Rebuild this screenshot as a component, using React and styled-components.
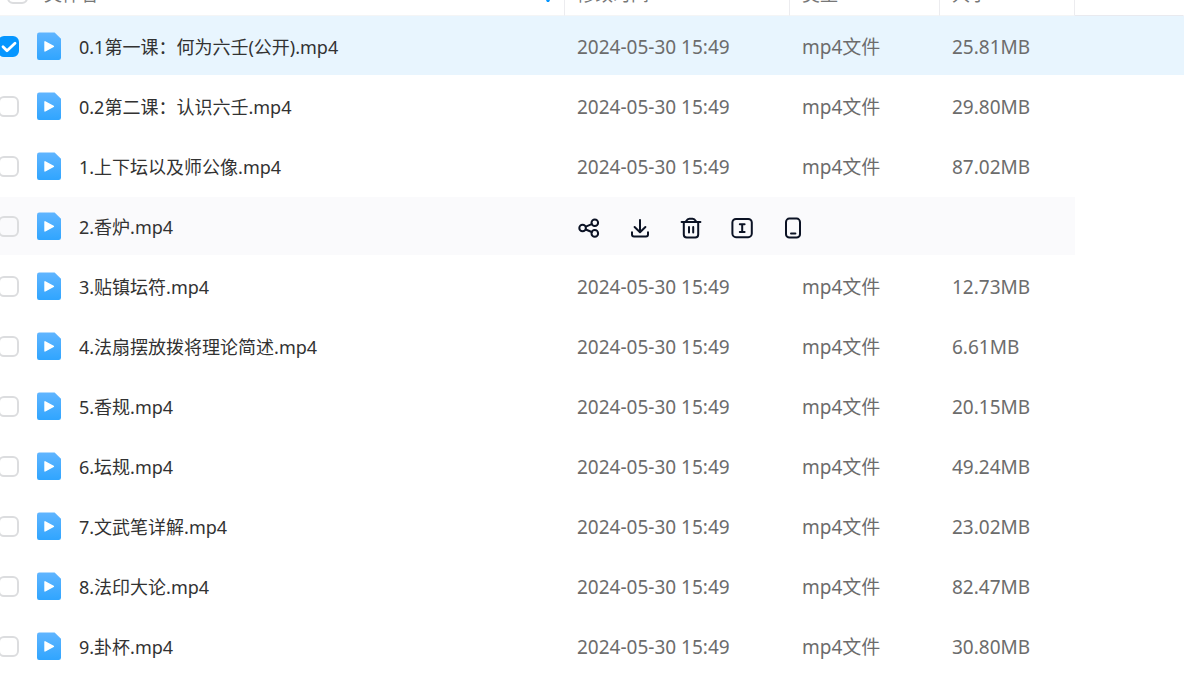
import { useState } from 'react';
import styled, { createGlobalStyle } from 'styled-components';

const GlobalStyle = createGlobalStyle`
  body {
    margin: 0;
    overflow: hidden;
    background: #fff;
    font-family: "Noto Sans", "Noto Sans CJK SC", sans-serif;
  }
`
const Page = styled.main`
  overflow: hidden;
`
// the list is scrolled a little, so the top of the header is cut off
const Table = styled.table`
  width: 100%;
  margin-top: -30px;
  table-layout: fixed;
  border-collapse: separate;
  border-spacing: 0;
`
const Col = styled.col`
  width: ${(p) => p.$width || 'auto'};
`
const HeadCell = styled.th`
  box-sizing: border-box;
  height: 46px;
  padding: 2px 12px 0;
  border-right: 1px solid ${(p) => (p.$last ? 'transparent' : '#ececef')};
  border-bottom: 1px solid ${(p) => (p.$last ? '#e9eaef' : '#f4f5f6')};
  color: #777;
  font-size: 18px;
  font-weight: 400;
  line-height: 24px;
  text-align: left;
`
const HeadName = styled.div`
  display: flex;
  align-items: center;
  gap: 16px;
  margin-left: -5px;
`
const SortArrow = styled.svg`
  width: 8px;
  height: 20px;
  margin-left: auto;
`
const Cell = styled.td`
  box-sizing: border-box;
  height: 60px;
  padding: 2px 12px 0;
  border-top: 1px solid ${(p) => (p.$selected ? '#e8f5fe' : '#fff')};
  border-bottom: 1px solid #fff;
  background: ${(p) => (p.$selected ? '#e8f5fe' : p.$active ? '#fafafc' : '#fff')};
  color: #6c6c6c;
  font-size: 19px;
  font-weight: 400;
  line-height: 24px;
  white-space: nowrap;
`
const NameCell = styled(Cell)`
  padding: 0;
  color: #323232;
  font-size: 18px;
`
const NameBox = styled.div`
  display: flex;
  align-items: center;
  margin-left: -2px;
`
const FileName = styled.label`
  padding-top: 2px;
  margin-left: 18px;
`
const CheckBox = styled.span`
  display: grid;
  width: 21px;
  height: 21px;
  flex: none;

  > * {
    grid-area: 1 / 1;
  }
`
const CheckInput = styled.input`
  appearance: none;
  box-sizing: border-box;
  width: 21px;
  height: 21px;
  margin: 0;
  border: 2px solid #dcdddf;
  border-radius: 6px;
  background: transparent;

  &:checked {
    border-color: #0696ff;
    background: #0696ff;
  }
`
const Tick = styled.svg`
  width: 21px;
  height: 21px;
  pointer-events: none;
`
const VideoSvg = styled.svg`
  width: 24px;
  height: 28px;
  margin-left: 18px;
  flex: none;
`
const Actions = styled.div`
  display: flex;
  gap: 27px;
  padding-top: 1px;
`
const ActionButton = styled.button`
  display: flex;
  width: 24px;
  height: 24px;
  padding: 0;
  border: 0;
  background: none;
  cursor: pointer;
`
const ActionSvg = styled.svg`
  width: 24px;
  height: 24px;
  fill: none;
  stroke: #0b1224;
  stroke-width: 2;
  stroke-linecap: round;
  stroke-linejoin: round;
`

const files = [
  { name: '0.1第一课：何为六壬(公开).mp4', size: '25.81MB' },
  { name: '0.2第二课：认识六壬.mp4', size: '29.80MB' },
  { name: '1.上下坛以及师公像.mp4', size: '87.02MB' },
  { name: '2.香炉.mp4', active: true },
  { name: '3.贴镇坛符.mp4', size: '12.73MB' },
  { name: '4.法扇摆放拨将理论简述.mp4', size: '6.61MB' },
  { name: '5.香规.mp4', size: '20.15MB' },
  { name: '6.坛规.mp4', size: '49.24MB' },
  { name: '7.文武笔详解.mp4', size: '23.02MB' },
  { name: '8.法印大论.mp4', size: '82.47MB' },
  { name: '9.卦杯.mp4', size: '30.80MB' },
]

const actions = [
  {
    label: '分享',
    icon: (
      <>
        <circle cx="5.6" cy="12" r="3.3" />
        <circle cx="17.8" cy="6.8" r="3.3" />
        <circle cx="17.8" cy="17.4" r="3.3" />
        <path d="M8.8 10.6l5.9-2.5M8.8 13.5l5.9 2.5" />
      </>
    ),
  },
  {
    label: '下载',
    icon: <path d="M12 4v12M6.6 11l5.4 5.2 5.4-5.2M4 16.2v2.3a2 2 0 0 0 2 2h12a2 2 0 0 0 2-2v-2.3" />,
  },
  {
    label: '删除',
    icon: (
      <>
        <path d="M2.6 6h18.8M4.8 6v12.4a3 3 0 0 0 3 3h8.4a3 3 0 0 0 3-3V6" />
        <path d="M6.8 5.6c1-1.6 1.8-2.9 3.6-2.9h3.2c1.8 0 2.6 1.3 3.6 2.9M10 11v5.4M14.2 11v5.4" />
      </>
    ),
  },
  {
    label: '重命名',
    icon: (
      <>
        <rect x="2.4" y="3" width="19.4" height="18.2" rx="3.6" />
        <path d="M9.8 8.2h4.8M9.8 16h4.8M12.2 8.2V16" />
      </>
    ),
  },
  {
    label: '发送到手机',
    icon: (
      <>
        <rect x="5" y="2.6" width="14" height="19" rx="3.4" />
        <path d="M10 17.6h4.4" />
      </>
    ),
  },
]

const Check = ({ checked, ...rest }) => (
  <CheckBox>
    <CheckInput type="checkbox" checked={checked} {...rest} />
    {checked && (
      <Tick viewBox="0 0 21 21" fill="none" stroke="#fff" strokeWidth="2.8" strokeLinecap="round" strokeLinejoin="round">
        <path d="M5 10.8l4 4 8-7.6" />
      </Tick>
    )}
  </CheckBox>
)

const VideoIcon = () => (
  <VideoSvg viewBox="0 0 24 28" aria-hidden="true">
    <defs>
      <linearGradient id="video" x1="0" y1="0" x2="0" y2="1">
        <stop offset="0" stopColor="#60b5ff" />
        <stop offset="1" stopColor="#30a5ff" />
      </linearGradient>
    </defs>
    <path d="M2.4 .6h15.2L24 6.8v18.9a2.3 2.3 0 0 1-2.3 2.3H2.4A2.3 2.3 0 0 1 0 25.7V2.9A2.3 2.3 0 0 1 2.4 .6z" fill="url(#video)" />
    <path d="M8 9.8v9.2l8.4-4.6z" fill="#fff" stroke="#fff" strokeWidth="1.4" strokeLinejoin="round" />
  </VideoSvg>
)

const Row = ({ file, id, selected, onToggle }) => {
  const state = { $selected: selected, $active: file.active }
  return (
    <tr>
      <NameCell {...state}>
        <NameBox>
          <Check id={id} checked={selected} onChange={onToggle} />
          <VideoIcon />
          <FileName htmlFor={id}>{file.name}</FileName>
        </NameBox>
      </NameCell>
      {file.active ? (
        <Cell {...state} colSpan={3}>
          <Actions>
            {actions.map((a) => (
              <ActionButton key={a.label} type="button" aria-label={a.label}>
                <ActionSvg viewBox="0 0 24 24">{a.icon}</ActionSvg>
              </ActionButton>
            ))}
          </Actions>
        </Cell>
      ) : (
        <>
          <Cell {...state}>2024-05-30 15:49</Cell>
          <Cell {...state}>mp4文件</Cell>
          <Cell {...state}>{file.size}</Cell>
        </>
      )}
      <Cell $selected={selected} />
    </tr>
  )
}

const App = () => {
  const [selected, setSelected] = useState([0])
  const toggle = (i) =>
    setSelected(selected.includes(i) ? selected.filter((n) => n !== i) : [...selected, i])
  const all = selected.length === files.length

  return (
    <Page>
      <GlobalStyle />
      <Table>
        <colgroup>
          <Col />
          <Col $width="225px" />
          <Col $width="150px" />
          <Col $width="135px" />
          <Col $width="109px" />
        </colgroup>
        <thead>
          <tr>
            <HeadCell>
              <HeadName>
                <Check aria-label="全选" checked={all} onChange={() => setSelected(all ? [] : files.map((f, i) => i))} />
                文件名
                <SortArrow viewBox="0 0 8 20" fill="#0696ff" aria-hidden="true">
                  <path d="M0 12h8l-3 6H3z" />
                </SortArrow>
              </HeadName>
            </HeadCell>
            <HeadCell>修改时间</HeadCell>
            <HeadCell>类型</HeadCell>
            <HeadCell>大小</HeadCell>
            <HeadCell as="td" $last />
          </tr>
        </thead>
        <tbody>
          {files.map((file, i) => (
            <Row key={file.name} id={`file-${i}`} file={file} selected={selected.includes(i)} onToggle={() => toggle(i)} />
          ))}
        </tbody>
      </Table>
    </Page>
  )
}
export default App
